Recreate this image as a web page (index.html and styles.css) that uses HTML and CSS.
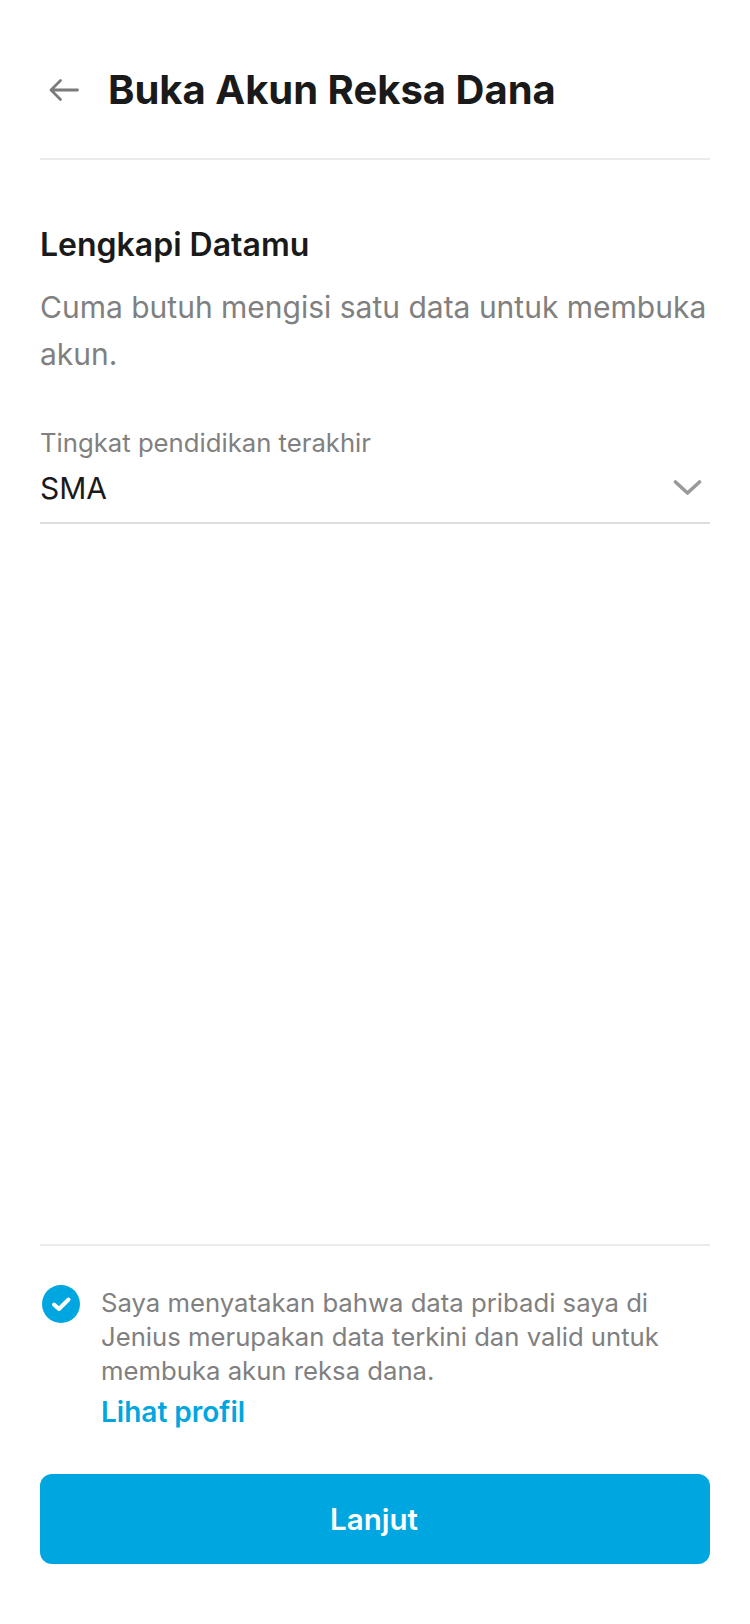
FILE: index.html
```html
<!DOCTYPE html>
<html lang="en">
<head>
    <meta charset="UTF-8">
    <meta name="viewport" content="width=device-width, initial-scale=1.0">
    <title>Buka Akun Reksa Dana</title>
    <link rel="stylesheet" href="styles.css">
</head>
<body>
    <div class="page">
        <header class="header">
            <svg class="back-icon" width="32" height="24" viewBox="0 0 32 24" fill="none" stroke="#7b7b7b" stroke-width="2.8" stroke-linecap="round" stroke-linejoin="round">
                <path d="M2 12H28.5M11.5 2.5L2 12L11.5 21.5"/>
            </svg>
            <h1 class="title">Buka Akun Reksa Dana</h1>
        </header>

        <main class="content">
            <h2 class="heading">Lengkapi Datamu</h2>
            <p class="desc">Cuma butuh mengisi satu data untuk membuka akun.</p>

            <div class="field">
                <div class="field-label">Tingkat pendidikan terakhir</div>
                <div class="field-row">
                    <span class="field-value">SMA</span>
                    <svg class="chevron" width="29" height="18" viewBox="0 0 29 18" fill="none" stroke="#9a9a9a" stroke-width="3.6" stroke-linecap="round" stroke-linejoin="round">
                        <path d="M2.5 3L14.5 14L26.5 3"/>
                    </svg>
                </div>
            </div>
        </main>

        <footer class="footer">
            <div class="consent">
                <svg class="check" width="38" height="38" viewBox="0 0 38 38">
                    <circle cx="19" cy="19" r="19" fill="#00a6e0"/>
                    <path d="M12 19.5L17 24L26.5 14.5" fill="none" stroke="#fff" stroke-width="4" stroke-linecap="round" stroke-linejoin="round"/>
                </svg>
                <div class="consent-body">
                    <p class="consent-text">Saya menyatakan bahwa data pribadi saya di Jenius merupakan data terkini dan valid untuk membuka akun reksa dana.</p>
                    <a class="link" href="#">Lihat profil</a>
                </div>
            </div>
            <button class="submit" type="button">Lanjut</button>
        </footer>
    </div>
</body>
</html>
```

FILE: styles.css
```css
* {
    box-sizing: border-box;
}

body {
    margin: 0;
    background: #fff;
    font-family: Inter, "Noto Sans", sans-serif;
    color: #1a1a1a;
}

.page {
    display: flex;
    flex-direction: column;
    height: 1624px;
    padding: 0 40px 60px;
}

.header {
    display: flex;
    align-items: center;
    height: 160px;
    padding: 22px 0 0 9px;
    border-bottom: 2px solid #ebebeb;
}

.back-icon {
    flex: none;
    margin-right: 27px;
}

.title {
    margin: 0;
    font-size: 40px;
    line-height: 50px;
    font-weight: 700;
}

.content {
    flex: 1;
    padding-top: 63px;
}

.heading {
    margin: 0;
    font-size: 32px;
    line-height: 44px;
    font-weight: 600;
}

.desc {
    margin: 17px 0 0;
    font-size: 30px;
    line-height: 47px;
    color: #808080;
}

.field {
    margin-top: 47px;
    padding-bottom: 7px;
    border-bottom: 2px solid #dedede;
}

.field-label {
    font-size: 25.7px;
    line-height: 36px;
    color: #808080;
}

.field-row {
    display: flex;
    align-items: center;
    justify-content: space-between;
    height: 54px;
    padding-right: 8px;
}

.field-value {
    font-size: 30px;
    line-height: 40px;
}

.footer {
    border-top: 2px solid #ebebeb;
    padding-top: 39px;
}

.consent {
    display: flex;
    padding-left: 2px;
}

.check {
    flex: none;
    margin-right: 21px;
}

.consent-body {
    flex: 1;
    padding-top: 1px;
}

.consent-text {
    margin: 0;
    font-size: 25.7px;
    line-height: 34px;
    color: #808080;
}

.link {
    display: block;
    margin-top: 5px;
    font-size: 28px;
    line-height: 38px;
    font-weight: 600;
    color: #00a6e0;
    text-decoration: none;
}

.submit {
    display: block;
    width: 100%;
    height: 90px;
    margin-top: 43px;
    padding: 0 2px 0 0;
    border: none;
    border-radius: 12px;
    background: #00a6e0;
    color: #fff;
    font-family: inherit;
    font-size: 29.5px;
    font-weight: 600;
}
```
